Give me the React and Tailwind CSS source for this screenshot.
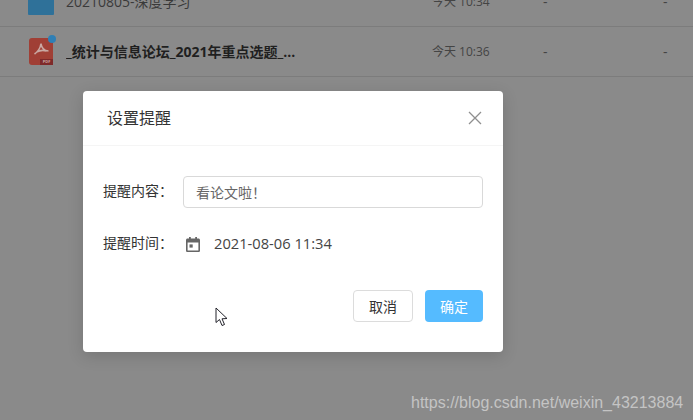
// App.jsx
import React from 'react';

const font = { sans: 'font-["Open_Sans","Noto_Sans_CJK_SC",sans-serif]' };

function FileRow({ icon, name, time, bold }) {
  return (
    <div className="h-[50px] flex items-center border-b border-[#7c7c7c] text-[#3a3a3a] text-[14px] shrink-0">
      <div className="w-[28px] ml-[27px] flex justify-center shrink-0">{icon}</div>
      <div className={`w-[366px] ml-[11px] truncate ${bold ? 'font-bold text-[#1f1f1f]' : ''}`}>{name}</div>
      <div className="w-[111px] text-[12px] text-[#444444]">{time}</div>
      <div className="w-[120px] text-[#444444]">-</div>
      <div className="text-[#444444]">-</div>
    </div>
  );
}

function FolderIcon() {
  return <div className="w-[26px] h-[26px] mt-[1px] bg-[#2f7199] rounded-[1px]" />;
}

function PdfIcon() {
  return (
    <div className="relative w-[24px] h-[27px] bg-[#a03f35] rounded-[3px]">
      <svg viewBox="0 0 23 27" className="absolute inset-0 w-full h-full" fill="none" stroke="#c9a8a2" strokeWidth="1.6">
        <path d="M11.5 5.5 C11 9 9.5 13 5 16 M11.5 5.5 C12 10 14 12.5 19 13 M7 14 C10 12.5 14 12 17 13" />
      </svg>
      <div className="absolute right-0 bottom-0 w-[13px] h-[6px] bg-[#7f2a2a] text-[4px] leading-[6px] text-center text-[#c9a8a2] font-bold">PDF</div>
      <div className="absolute -top-[3px] -right-[3px] w-[8px] h-[8px] rounded-full bg-[#2f7fb5]" />
    </div>
  );
}

function CalendarIcon() {
  return (
    <svg viewBox="0 0 14 15" className="w-[14px] h-[15px]" fill="#666666">
      <path d="M3 0h1.8v1.6h4.4V0H11v1.6h1.4c.9 0 1.6.7 1.6 1.6v10.2c0 .9-.7 1.6-1.6 1.6H1.6C.7 15 0 14.300 0 13.400V3.200C0 2.300.7 1.600 1.600 1.600H3V0zM1.600 5.400v8h10.800v-8H1.600z" />
      <rect x="3.500" y="7.400" width="3.200" height="3.200" />
    </svg>
  );
}

function CursorIcon() {
  return (
    <svg viewBox="0 0 14 21" className="w-[14px] h-[21px]" fill="#ffffff" stroke="#23232b" strokeWidth="1">
      <path d="M1 1 L1 15.500 L4.500 12.500 L7 18.500 L9.500 17.500 L7 11.800 L12 11.500 Z" />
    </svg>
  );
}

export default function App() {
  return (
    <div className={`relative w-[693px] h-[420px] overflow-hidden bg-[#8a8a8a] ${font.sans}`}>
      <div className="-mt-[23px] flex flex-col">
        <FileRow icon={<FolderIcon />} name="20210805-深度学习" time="今天 10:34" />
        <FileRow icon={<PdfIcon />} name="_统计与信息论坛_2021年重点选题_..." time="今天 10:36" bold />
      </div>

      {/* dialog */}
      <div className="absolute left-[83px] top-[91px] w-[420px] h-[261px] bg-white rounded-[4px] shadow-[0_4px_16px_rgba(0,0,0,0.15)] flex flex-col">
        <div className="h-[55px] border-b border-[#f5f5f5] flex items-center justify-between pl-[24px] pr-[21px] shrink-0">
          <span className="text-[16px] text-[#333333]">设置提醒</span>
          <svg viewBox="0 0 14 14" className="w-[14px] h-[14px]" stroke="#8f8f8f" strokeWidth="1.3" fill="none">
            <path d="M1 1 L13 13 M13 1 L1 13" />
          </svg>
        </div>

        <div className="px-[20px] pt-[30px] flex flex-col">
          <div className="flex items-center h-[32px]">
            <span className="w-[80px] text-[14px] text-[#333333] -mt-[3px] whitespace-nowrap">提醒内容：</span>
            <div className="w-[300px] h-[32px] border border-[#d9d9d9] rounded-[4px] flex items-center pl-[12px] text-[14px] text-[#666666]">
              看论文啦！
            </div>
          </div>
          <div className="flex items-center h-[32px] mt-[20px]">
            <span className="w-[80px] text-[14px] text-[#333333] -mt-[4px] whitespace-nowrap">提醒时间：</span>
            <div className="w-[31px] pl-[3px] flex items-center"><CalendarIcon /></div>
            <span className="text-[14.700px] -mt-[2px] text-[#444444]">2021-08-06 11:34</span>
          </div>
        </div>

        <div className="flex justify-end gap-[12px] px-[20px] mt-[30px]">
          <button className="w-[60px] h-[32px] border border-[#dcdcdc] rounded-[4px] bg-white text-[14px] text-[#333333]">取消</button>
          <button className="w-[58px] h-[32px] rounded-[4px] bg-[#55bbff] text-[14px] text-white">确定</button>
        </div>
      </div>

      <div className="absolute left-[215px] top-[307px]"><CursorIcon /></div>

      <div className='absolute left-[411px] top-[391px] font-["Liberation_Sans",sans-serif] text-[16px] text-[#c4c4c4] whitespace-nowrap'>
        https://blog.csdn.net/weixin_43213884
      </div>
    </div>
  );
}
